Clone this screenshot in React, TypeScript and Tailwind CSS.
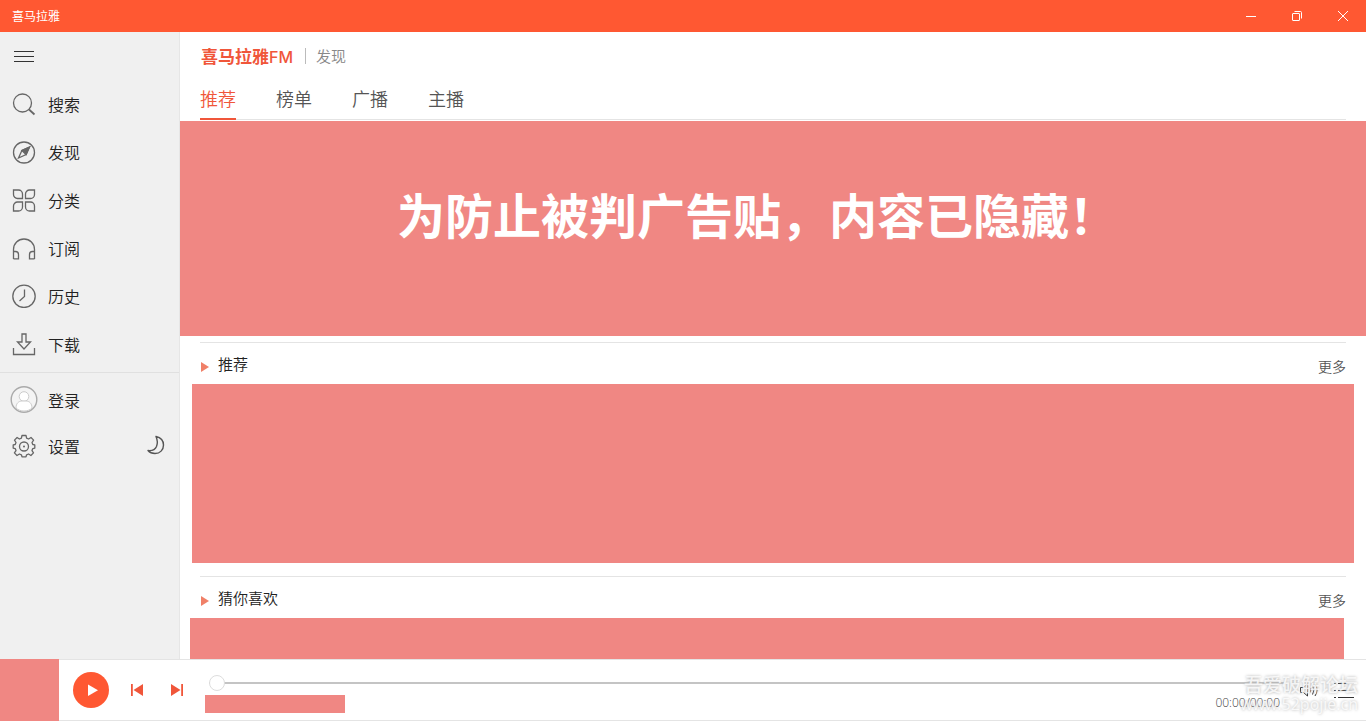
import { useState, type ReactNode } from 'react'

const NAV_ITEMS = [
  { label: '搜索', icon: <SearchIcon /> },
  { label: '发现', icon: <CompassIcon /> },
  { label: '分类', icon: <CategoryIcon /> },
  { label: '订阅', icon: <HeadphonesIcon /> },
  { label: '历史', icon: <ClockIcon /> },
  { label: '下载', icon: <DownloadIcon /> },
]

const TABS = ['推荐', '榜单', '广播', '主播']

export default function App() {
  return (
    <div className="flex h-screen flex-col overflow-hidden bg-white font-['Noto_Sans_CJK_SC',sans-serif] font-[350] text-[#333]">
      <TitleBar />
      <div className="flex min-h-0 flex-1">
        <Sidebar />
        <Content />
      </div>
      <Player />
    </div>
  )
}

function TitleBar() {
  return (
    <header className="flex h-8 shrink-0 items-center justify-between bg-[#ff5832] text-white">
      <span className="pl-3 text-xs font-normal">喜马拉雅</span>
      <div className="flex h-full">
        <WindowButton label="最小化">
          <path d="M0 5.5h10" />
        </WindowButton>
        <WindowButton label="还原">
          <rect x="0.5" y="2.5" width="7" height="7" rx="0.5" />
          <path d="M2.5 0.5h6a1 1 0 0 1 1 1v6" />
        </WindowButton>
        <WindowButton label="关闭">
          <path d="M0 0l10 10M10 0L0 10" />
        </WindowButton>
      </div>
    </header>
  )
}

function WindowButton({ label, children }: { label: string; children: ReactNode }) {
  return (
    <button type="button" aria-label={label} className="flex w-[46px] items-center justify-center hover:bg-white/20">
      <svg width="10" height="10" viewBox="0 0 10 10" fill="none" stroke="currentColor" strokeWidth="1" aria-hidden>
        {children}
      </svg>
    </button>
  )
}

function Sidebar() {
  return (
    <aside className="w-[180px] shrink-0 border-r border-[#e6e6e6] bg-[#f0f0f0]">
      <button type="button" aria-label="菜单" className="flex h-12 w-12 items-center justify-center">
        <svg width="20" height="12" viewBox="0 0 20 12" stroke="#333" aria-hidden>
          <path d="M0 1.5h20M0 6.5h20M0 11.5h20" />
        </svg>
      </button>
      <nav>
        {NAV_ITEMS.map((item) => (
          <div key={item.label} className="h-12">
            <NavLink label={item.label} icon={item.icon} />
          </div>
        ))}
      </nav>
      <div className="mt-1 border-t border-[#e0e0e0] pt-1">
        <div className="h-[46px]">
          <NavLink label="登录" icon={<UserIcon />} />
        </div>
        <div className="flex h-[46px] items-center justify-between pr-3">
          <NavLink label="设置" icon={<GearIcon />} />
          <button type="button" aria-label="夜间模式">
            <MoonIcon />
          </button>
        </div>
      </div>
    </aside>
  )
}

function NavLink({ label, icon }: { label: string; icon: ReactNode }) {
  return (
    <a href="#" className="flex h-full items-center text-base text-[#222]">
      <span className="flex w-12 justify-center">{icon}</span>
      {label}
    </a>
  )
}

function Content() {
  const [active, setActive] = useState('推荐')

  return (
    <main className="min-w-0 flex-1 overflow-hidden">
      <div className="flex h-12 items-center pl-5">
        <Logo />
        <span className="ml-3 h-4 border-l border-[#bbb] pl-2.5" />
        <span className="text-[15px] text-[#888]">发现</span>
      </div>
      <div className="mx-5 mb-px flex h-10 gap-10 border-b border-[#e4e4e4]">
        {TABS.map((tab) => (
          <button
            key={tab}
            type="button"
            onClick={() => setActive(tab)}
            className={
              tab === active
                ? 'h-10 border-b-2 border-[#f0563a] pb-0.5 text-lg text-[#f0563a]'
                : 'h-10 border-b-2 border-transparent pb-0.5 text-lg text-[#555]'
            }
          >
            {tab}
          </button>
        ))}
      </div>
      <section className="flex h-[215px] justify-center bg-[#f08783] pt-[68px] pr-8">
        <h1 className="text-5xl font-bold text-white">为防止被判广告贴，内容已隐藏！</h1>
      </section>
      <div className="pt-1.5">
        <SectionHeader title="推荐" />
        <div className="mx-3 h-[179px] bg-[#f08783]" />
      </div>
      <div className="pt-[13px]">
        <SectionHeader title="猜你喜欢" />
        <div className="mr-[22px] ml-2.5 h-[179px] bg-[#f08783]" />
      </div>
    </main>
  )
}

function SectionHeader({ title }: { title: string }) {
  return (
    <div className="mx-5 flex h-[42px] items-center justify-between border-t border-[#e4e4e4] pt-0.5">
      <div className="flex items-center gap-2">
        <svg width="10" height="10" viewBox="0 0 10 10" className="mt-1" aria-hidden>
          <path d="M1 0l8 5-8 5z" fill="#f08068" />
        </svg>
        <h2 className="text-[15px] text-[#222]">{title}</h2>
      </div>
      <a href="#" className="pt-0.5 text-sm text-[#555]">
        更多
      </a>
    </div>
  )
}

function Player() {
  return (
    <footer className="relative flex h-[62px] shrink-0 border-y border-[#e4e4e4] bg-white">
      <div className="-my-px w-[59px] bg-[#f08783]" />
      <div className="flex items-center pl-3.5">
        <button type="button" aria-label="播放" className="flex size-9 items-center justify-center rounded-full bg-[#ff5832]">
          <svg width="36" height="36" viewBox="0 0 36 36" fill="#fff" aria-hidden>
            <path d="M15 12.4v11.6l10-5.8z" />
          </svg>
        </button>
        <button type="button" aria-label="上一首" className="ml-5 flex size-4 items-center justify-center">
          <svg width="14" height="14" viewBox="0 0 14 14" fill="#f0563a" aria-hidden>
            <path d="M1 1h1.800v12H1zM13 1v12L3.500 7z" />
          </svg>
        </button>
        <button type="button" aria-label="下一首" className="ml-6 flex size-4 items-center justify-center">
          <svg width="14" height="14" viewBox="0 0 14 14" fill="#f0563a" aria-hidden>
            <path d="M11.200 1H13v12h-1.800zM1 1v12l9.500-6z" />
          </svg>
        </button>
      </div>
      <div className="ml-5 flex-1 pt-[15px]">
        <input
          type="range"
          aria-label="播放进度"
          defaultValue={0}
          className="ml-1 block h-4 w-full appearance-none bg-transparent [&::-webkit-slider-runnable-track]:h-0.5 [&::-webkit-slider-runnable-track]:bg-[#c4c4c4] [&::-webkit-slider-thumb]:-mt-[7px] [&::-webkit-slider-thumb]:size-4 [&::-webkit-slider-thumb]:appearance-none [&::-webkit-slider-thumb]:rounded-full [&::-webkit-slider-thumb]:border [&::-webkit-slider-thumb]:border-[#ddd] [&::-webkit-slider-thumb]:bg-white"
        />
        <div className="mt-1 flex items-start justify-between">
          <div className="h-[18px] w-[140px] bg-[#f08783]" />
          <span className="font-['Open_Sans',sans-serif] text-xs font-light text-[#444]">00:00/00:00</span>
        </div>
      </div>
      <div className="flex items-center gap-4 pr-3 pl-5">
        <button type="button" aria-label="音量">
          <VolumeIcon />
        </button>
        <button type="button" aria-label="播放列表">
          <svg width="20" height="16" viewBox="0 0 20 16" stroke="#333" aria-hidden>
            <path d="M0 1.5h2M4 1.5h16M0 8.5h2M4 8.5h16M0 15.5h2M4 15.5h16" />
          </svg>
        </button>
      </div>
      <div className="pointer-events-none absolute right-2 bottom-1.5 text-right font-medium text-white/80 [text-shadow:0_0_3px_#aaa]">
        <p className="text-[19px] leading-5">吾爱破解论坛</p>
        <p className="font-['Open_Sans',sans-serif] text-base leading-5">www.52pojie.cn</p>
      </div>
    </footer>
  )
}

function Logo() {
  return (
    <span className="pl-px text-[17px] leading-6 font-bold text-[#f0563a]">
      喜马拉雅<span className="font-['Inter',sans-serif] text-base font-medium">FM</span>
    </span>
  )
}

function LineIcon({ children }: { children: ReactNode }) {
  return (
    <svg width="24" height="24" viewBox="0 0 24 24" fill="none" stroke="#666" strokeWidth="1.3" aria-hidden>
      {children}
    </svg>
  )
}

function SearchIcon() {
  return (
    <LineIcon>
      <circle cx="10.5" cy="11" r="9" />
      <path d="M17 17.500l5.500 5" strokeWidth="1.8" />
    </LineIcon>
  )
}

function CompassIcon() {
  return (
    <LineIcon>
      <circle cx="12" cy="12.500" r="10.5" />
      <path d="M17.500 7l-7.600 3.400L6.500 18l7.600-3.400z" />
      <path d="M17.500 7l-7.600 3.400 4.200 4.200z" fill="#666" />
    </LineIcon>
  )
}

function CategoryIcon() {
  return (
    <LineIcon>
      <path d="M1.500 2h5a4 4 0 0 1 4 4v4.500h-5a4 4 0 0 1-4-4z" />
      <path d="M22.500 2h-5a4 4 0 0 0-4 4v4.500h5a4 4 0 0 0 4-4z" />
      <path d="M1.500 23h5a4 4 0 0 0 4-4v-5h-5a4 4 0 0 0-4 4z" />
      <path d="M22.500 23h-5a4 4 0 0 1-4-4v-5h5a4 4 0 0 1 4 4z" />
    </LineIcon>
  )
}

function HeadphonesIcon() {
  return (
    <LineIcon>
      <path d="M1.500 23V13.500a10.500 10.500 0 0 1 21 0V23" />
      <path d="M1.500 15.500h2a3 3 0 0 1 3 3V22.800h-5M22.500 15.500h-2a3 3 0 0 0-3 3V22.800h5" />
    </LineIcon>
  )
}

function ClockIcon() {
  return (
    <LineIcon>
      <circle cx="12" cy="12.300" r="11.2" />
      <path d="M12.500 5.500v7L7.500 17" />
    </LineIcon>
  )
}

function DownloadIcon() {
  return (
    <LineIcon>
      <path d="M1.500 16v6.500h21V16" />
      <path d="M10 2h4v8h4.500L12 17 5.500 10H10z" />
    </LineIcon>
  )
}

function UserIcon() {
  return (
    <svg width="28" height="28" viewBox="0 0 28 28" fill="#fff" aria-hidden>
      <circle cx="14" cy="13.500" r="12.800" fill="#f4f4f4" stroke="#aaa" strokeWidth="1.4" />
      <circle cx="14" cy="10.500" r="4.800" stroke="#ccc" />
      <path d="M6 22c0-5 3-6.500 5-7h6c2 .5 5 2 5 7-4 4-12 4-16 0z" stroke="#ccc" />
    </svg>
  )
}

function GearIcon() {
  return (
    <LineIcon>
      <path
        strokeLinejoin="round"
        d="M10 1.500h4l.6 2.700 2 .8 2.400-1.500 2.600 2.600L20 8.500l.8 2 2 .4v3.200l-2 .5-.8 2 1.500 2.300-2.600 2.600-2.300-1.500-2 .8-.6 2h-4l-.6-2-2-.8L5 21.500l-2.600-2.600L4 16.600l-.8-2-2-.5v-3.200l2-.4.8-2L2.500 6.100 5.100 3.500 7.400 5l2-.8z"
      />
      <circle cx="12" cy="12.500" r="4.500" />
      <circle cx="12" cy="12.500" r="1" fill="#666" stroke="none" />
    </LineIcon>
  )
}

function MoonIcon() {
  return (
    <svg width="24" height="24" viewBox="0 0 24 24" fill="none" stroke="#555" strokeWidth="1.400" strokeLinejoin="round" aria-hidden>
      <path d="M13 2.500c5 1.200 7.500 4.500 7.500 8.500 0 5-3.500 8.500-8.500 8.500-3 0-5.500-1.200-7-3 4 .5 7.200-1 8.500-4 1.300-3.200.8-7-.5-10z" />
    </svg>
  )
}

function VolumeIcon() {
  return (
    <svg width="18" height="16" viewBox="0 0 18 16" fill="none" stroke="#333" aria-hidden>
      <path d="M.5 5.500h3l4-3.500v12l-4-3.500h-3z" />
      <path d="M10 5.500q1.500 2.500 0 5M12.500 3.500q3 4.500 0 9M15 2q4 6 0 12" />
    </svg>
  )
}
